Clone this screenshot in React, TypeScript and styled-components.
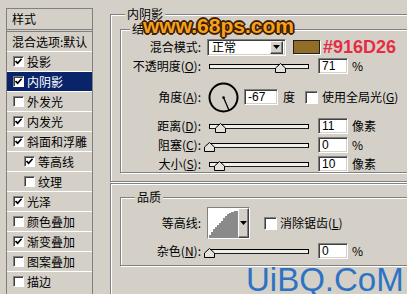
import styled, { createGlobalStyle } from "styled-components";

const GlobalStyle = createGlobalStyle`
  html, body {
    margin: 0;
    padding: 0;
    background: #d4d0c8;
    overflow: hidden;
  }
  body {
    font-family: "Noto Sans CJK SC", "Liberation Sans", sans-serif;
    font-size: 12px;
    color: #000;
  }
`;

const layers = [
  { name: "投影", checked: true },
  { name: "内阴影", checked: true, active: true },
  { name: "外发光", checked: false },
  { name: "内发光", checked: true },
  { name: "斜面和浮雕", checked: true },
  { name: "等高线", checked: true, indent: true },
  { name: "纹理", checked: false, indent: true },
  { name: "光泽", checked: true },
  { name: "颜色叠加", checked: false },
  { name: "渐变叠加", checked: true },
  { name: "图案叠加", checked: false },
  { name: "描边", checked: false },
];

function CheckMark() {
  return (
    <svg width="7" height="7" viewBox="0 0 7 7">
      <path d="M0.5 3 L2.6 5.2 L6.6 0.8" fill="none" stroke="#000" strokeWidth="1.7" />
    </svg>
  );
}

function DownArrow() {
  return (
    <svg width="7" height="4" viewBox="0 0 7 4">
      <path d="M0 0 H7 L3.5 4 Z" fill="#000" />
    </svg>
  );
}

function Box({ checked, size = 11 }: { checked?: boolean; size?: number }) {
  return <Check $size={size}>{checked && <CheckMark />}</Check>;
}

function Slider({ value }: { value: number }) {
  return (
    <SliderWrap>
      <Track />
      <Thumb width="11" height="10" viewBox="0 0 11 10" style={{ left: value - 5 }}>
        <path d="M5.5 0.5 L10.5 5 V9.5 H0.5 V5 Z" fill="#e4e1da" stroke="#000" />
      </Thumb>
    </SliderWrap>
  );
}

function SliderRow({ label, value, unit, mt }: { label: React.ReactNode; value: number; unit: string; mt: number }) {
  return (
    <Row $mt={mt}>
      <Label>{label}</Label>
      <Slider value={value} />
      <Field $w={30} $ml={9}>{value}</Field>
      <Unit>{unit}</Unit>
    </Row>
  );
}

export default function App() {
  return (
    <Window>
      <GlobalStyle />
      <StyleList>
        <ListHeader>样式</ListHeader>
        <ListItem $plain>混合选项:默认</ListItem>
        {layers.map((l) => (
          <ListItem key={l.name} $active={l.active} $indent={l.indent}>
            <Box checked={l.checked} />
            <span>{l.name}</span>
          </ListItem>
        ))}
      </StyleList>

      <Panel>
        <Group $h={168}>
          <Legend $x={14}>内阴影</Legend>
          <Group $h={144} $ml={9} $mt={7}>
            <Legend $x={9}>结构</Legend>
            <Row $mt={2}>
              <Label>混合模式:</Label>
              <Select>
                <span>正常</span>
                <DropButton>
                  <DownArrow />
                </DropButton>
              </Select>
              <Swatch />
              <Hex>#916D26</Hex>
            </Row>
            <SliderRow label={<>不透明度(<u>O</u>):</>} value={71} unit="%" mt={3} />
            <Row $h={32} $mt={7}>
              <Label>角度(<u>A</u>):</Label>
              <Dial width="31" height="31" viewBox="0 0 31 31">
                <circle cx="15.5" cy="15.5" r="14" fill="none" stroke="#000" strokeWidth="2" />
                <line x1="15.5" y1="15.5" x2="20.8" y2="27.8" stroke="#000" strokeWidth="1.3" />
                <circle cx="15.5" cy="15.5" r="1.3" fill="#000" />
              </Dial>
              <Field $w={34} $ml={5}>-67</Field>
              <Unit $ml={5}>度</Unit>
              <CheckWrap $ml={10}>
                <Box size={13} />
              </CheckWrap>
              <Unit $ml={4}>使用全局光(<u>G</u>)</Unit>
            </Row>
            <SliderRow label={<>距离(<u>D</u>):</>} value={11} unit="像素" mt={5} />
            <SliderRow label={<>阻塞(<u>C</u>):</>} value={0} unit="%" mt={3} />
            <SliderRow label={<>大小(<u>S</u>):</>} value={10} unit="像素" mt={3} />
          </Group>
        </Group>

        <Group $h={200} $mt={1}>
          <Group $h={69} $ml={9} $mt={13}>
            <Legend $x={14}>品质</Legend>
            <Row $h={32} $mt={2}>
              <Label>等高线:</Label>
              <ContourPicker>
                <svg width="30" height="30" viewBox="0 0 30 30">
                  <rect width="30" height="30" fill="#fff" />
                  <path
                    d="M1 30 V27 H3 V24 H5 V21 H7 V19 H9 V17 H11 V15 H13 V13 H15 V10 H17 V8 H19 V6 H21 V5 H23 V4 H26 V3 H30 V30 Z"
                    fill="#8a8a8a"
                  />
                </svg>
                <DropButton $tall>
                  <DownArrow />
                </DropButton>
              </ContourPicker>
              <CheckWrap $ml={14}>
                <Box size={13} />
              </CheckWrap>
              <Unit $ml={3}>消除锯齿(<u>L</u>)</Unit>
            </Row>
            <SliderRow label={<>杂色(<u>N</u>):</>} value={0} unit="%" mt={4} />
          </Group>
        </Group>
      </Panel>

      <SiteMark>www.68ps.com</SiteMark>
      <BlueMark>UiBQ.CoM</BlueMark>
    </Window>
  );
}

const Window = styled.div`
  position: relative;
  display: flex;
  align-items: flex-start;
  gap: 17px;
  width: 407px;
  height: 294px;
  padding: 8px 0 0 6px;
  box-sizing: border-box;
  overflow: hidden;
`;

const StyleList = styled.div`
  width: 87px;
  height: 300px;
  flex-shrink: 0;
  box-sizing: border-box;
  border: 1px solid #808080;
  border-bottom: none;
`;

const ListHeader = styled.div`
  height: 20px;
  line-height: 20px;
  padding-left: 5px;
  border-bottom: 3px double #808080;
`;

const ListItem = styled.div<{ $active?: boolean; $indent?: boolean; $plain?: boolean }>`
  display: flex;
  align-items: center;
  gap: 3px;
  height: 19px;
  line-height: 19px;
  white-space: nowrap;
  border-top: ${(p) => (p.$plain ? "none" : "1px solid #fff")};
  padding-left: ${(p) => (p.$plain ? 5 : p.$indent ? 17 : 6)}px;
  background: ${(p) => (p.$active ? "#0a246a" : "transparent")};
  color: ${(p) => (p.$active ? "#fff" : "#000")};
`;

const Check = styled.span<{ $size: number }>`
  display: inline-flex;
  align-items: center;
  justify-content: center;
  flex-shrink: 0;
  width: ${(p) => p.$size}px;
  height: ${(p) => p.$size}px;
  box-sizing: border-box;
  background: #fff;
  border-top: 1px solid #808080;
  border-left: 1px solid #808080;
  border-right: 1px solid #fff;
  border-bottom: 1px solid #fff;
  box-shadow: inset 1px 1px 0 #404040;
`;

const CheckWrap = styled.span<{ $ml: number }>`
  display: inline-flex;
  margin-left: ${(p) => p.$ml}px;
`;

const Panel = styled.div`
  display: flex;
  flex-direction: column;
  width: 330px;
  flex-shrink: 0;
  margin-top: 6px;
`;

const Group = styled.div<{ $h: number; $ml?: number; $mt?: number }>`
  display: flex;
  flex-direction: column;
  box-sizing: border-box;
  height: ${(p) => p.$h}px;
  margin: ${(p) => p.$mt ?? 0}px 0 0 ${(p) => p.$ml ?? 0}px;
  border: 1px solid #808080;
  box-shadow: inset 1px 1px 0 #fff, 1px 1px 0 #fff;
`;

const Legend = styled.div<{ $x: number }>`
  align-self: flex-start;
  margin: -9px 0 0 ${(p) => p.$x}px;
  padding: 0 2px;
  height: 16px;
  line-height: 16px;
  background: #d4d0c8;
`;

const Row = styled.div<{ $h?: number; $mt?: number }>`
  display: flex;
  align-items: center;
  height: ${(p) => p.$h ?? 16}px;
  margin-top: ${(p) => p.$mt ?? 0}px;
  white-space: nowrap;
`;

const Label = styled.span`
  width: 80px;
  flex-shrink: 0;
  text-align: right;
  line-height: 16px;
`;

const Unit = styled.span<{ $ml?: number }>`
  margin-left: ${(p) => p.$ml ?? 4}px;
  line-height: 16px;
`;

const sunken = `
  background: #fff;
  border-top: 1px solid #808080;
  border-left: 1px solid #808080;
  border-right: 1px solid #fff;
  border-bottom: 1px solid #fff;
  box-shadow: inset 1px 1px 0 #404040, inset -1px -1px 0 #d4d0c8;
`;

const Select = styled.div`
  ${sunken}
  display: flex;
  align-items: center;
  justify-content: space-between;
  width: 79px;
  height: 17px;
  margin-left: 6px;
  padding: 0 2px 0 4px;
  box-sizing: border-box;
  flex-shrink: 0;
  line-height: 14px;
`;

const DropButton = styled.span<{ $tall?: boolean }>`
  display: flex;
  justify-content: center;
  align-items: ${(p) => (p.$tall ? "flex-start" : "center")};
  padding-top: ${(p) => (p.$tall ? 12 : 0)}px;
  box-sizing: border-box;
  width: ${(p) => (p.$tall ? 11 : 13)}px;
  height: ${(p) => (p.$tall ? 30 : 13)}px;
  background: #d4d0c8;
  border-top: 1px solid #fff;
  border-left: 1px solid #fff;
  border-right: 1px solid #404040;
  border-bottom: 1px solid #404040;
  box-shadow: inset -1px -1px 0 #808080;
`;

const Swatch = styled.span`
  width: 27px;
  height: 14px;
  margin-left: 7px;
  box-sizing: border-box;
  background: #916d26;
  border: 1px solid #202020;
  box-shadow: 1px 1px 0 #fff;
  flex-shrink: 0;
`;

const Hex = styled.span`
  margin-left: 3px;
  font: bold 18px/18px "Liberation Sans", Arial, sans-serif;
  color: #e62c42;
`;

const Field = styled.span<{ $w: number; $ml: number }>`
  ${sunken}
  width: ${(p) => p.$w}px;
  height: 16px;
  margin-left: ${(p) => p.$ml}px;
  padding-left: 3px;
  box-sizing: border-box;
  flex-shrink: 0;
  font: 12px/14px "Liberation Sans", Arial, sans-serif;
`;

const SliderWrap = styled.div`
  position: relative;
  width: 100px;
  height: 16px;
  margin-left: 8px;
  flex-shrink: 0;
`;

const Track = styled.div`
  margin-top: 6px;
  height: 5px;
  box-sizing: border-box;
  border: 1px solid #000;
  border-bottom-color: #202020;
  background: #efeee9;
`;

const Thumb = styled.svg`
  position: absolute;
  top: 5px;
`;

const Dial = styled.svg`
  margin-left: 7px;
  flex-shrink: 0;
`;

const ContourPicker = styled.div`
  display: flex;
  margin-left: 6px;
  border-top: 1px solid #808080;
  border-left: 1px solid #808080;
  border-right: 1px solid #fff;
  border-bottom: 1px solid #fff;
`;

const SiteMark = styled.div`
  position: absolute;
  left: 143px;
  top: 14px;
  font: bold 21px/24px "Liberation Sans", Arial, sans-serif;
  color: #f5a21c;
  text-shadow: 1px 0 0 #3a1c02, -1px 0 0 #3a1c02, 0 1px 0 #3a1c02, 0 -1px 0 #3a1c02,
    1px 1px 0 #3a1c02, -1px -1px 0 #3a1c02, 1px -1px 0 #3a1c02, -1px 1px 0 #3a1c02,
    2px 0 0 #5a3008, -2px 0 0 #5a3008, 0 2px 0 #5a3008, 0 -2px 0 #5a3008;
`;

const BlueMark = styled.div`
  position: absolute;
  left: 246px;
  top: 263px;
  font: 33px/33px "Liberation Sans", Arial, sans-serif;
  color: #2d73c4;
`;
